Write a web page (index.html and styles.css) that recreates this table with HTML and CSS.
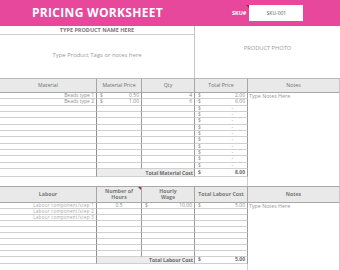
FILE: index.html
```html
<!DOCTYPE html>
<html>
<head>
<meta charset="utf-8">
<link rel="stylesheet" href="styles.css">
</head>
<body>
<div class="sheet">
  <header class="banner">
    <h1 class="title">PRICING WORKSHEET</h1>
    <div class="sku">
      <span class="sku-label">SKU#</span>
      <span class="sku-box">SKU-001<i class="flag"></i></span>
    </div>
  </header>

  <section class="product">
    <div class="product-left">
      <div class="product-name">TYPE PRODUCT NAME HERE</div>
      <div class="product-tags">Type Product Tags or notes here</div>
    </div>
    <div class="product-photo">PRODUCT PHOTO</div>
  </section>

  <section class="table mat">
    <div class="th">Material</div>
    <div class="th">Material Price</div>
    <div class="th">Qty</div>
    <div class="th">Total Price</div>
    <div class="th last">Notes</div>
    <div class="notes-cell mat-notes">Type Notes Here</div>

    <div class="td name">Beads type 1</div><div class="td money"><span>$</span><span>0.50</span></div><div class="td num">4</div><div class="td money"><span>$</span><span>2.00</span></div>
    <div class="td name">Beads type 2</div><div class="td money"><span>$</span><span>1.00</span></div><div class="td num">6</div><div class="td money"><span>$</span><span>6.00</span></div>
    <div class="td name"></div><div class="td"></div><div class="td"></div><div class="td money"><span>$</span><span class="dash">-</span></div>
    <div class="td name"></div><div class="td"></div><div class="td"></div><div class="td money"><span>$</span><span class="dash">-</span></div>
    <div class="td name"></div><div class="td"></div><div class="td"></div><div class="td money"><span>$</span><span class="dash">-</span></div>
    <div class="td name"></div><div class="td"></div><div class="td"></div><div class="td money"><span>$</span><span class="dash">-</span></div>
    <div class="td name"></div><div class="td"></div><div class="td"></div><div class="td money"><span>$</span><span class="dash">-</span></div>
    <div class="td name"></div><div class="td"></div><div class="td"></div><div class="td money"><span>$</span><span class="dash">-</span></div>
    <div class="td name"></div><div class="td"></div><div class="td"></div><div class="td money"><span>$</span><span class="dash">-</span></div>
    <div class="td name"></div><div class="td"></div><div class="td"></div><div class="td money"><span>$</span><span class="dash">-</span></div>
    <div class="td name"></div><div class="td"></div><div class="td"></div><div class="td money"><span>$</span><span class="dash">-</span></div>
    <div class="td name"></div><div class="td"></div><div class="td"></div><div class="td money"><span>$</span><span class="dash">-</span></div>

    <div class="td total-blank"></div>
    <div class="total-label">Total Material Cost</div>
    <div class="td money total-val"><span>$</span><span>8.00</span></div>
    <div class="spacer"></div>
  </section>

  <section class="table lab">
    <div class="th">Labour</div>
    <div class="th two">Number of<br>Hours<i class="flag flag-th"></i></div>
    <div class="th two">Hourly<br>Wage</div>
    <div class="th">Total Labour Cost</div>
    <div class="th last">Notes</div>
    <div class="notes-cell lab-notes">Type Notes Here</div>

    <div class="td name">Labour component/step 1</div><div class="td center">0.5</div><div class="td money"><span>$</span><span>10.00</span></div><div class="td money"><span>$</span><span>5.00</span></div>
    <div class="td name">Labour component/step 2</div><div class="td"></div><div class="td"></div><div class="td"></div>
    <div class="td name">Labour component/step 3</div><div class="td"></div><div class="td"></div><div class="td"></div>
    <div class="td name"></div><div class="td"></div><div class="td"></div><div class="td"></div>
    <div class="td name"></div><div class="td"></div><div class="td"></div><div class="td"></div>
    <div class="td name"></div><div class="td"></div><div class="td"></div><div class="td"></div>
    <div class="td name"></div><div class="td"></div><div class="td"></div><div class="td"></div>
    <div class="td name"></div><div class="td"></div><div class="td"></div><div class="td"></div>
    <div class="td name"></div><div class="td"></div><div class="td"></div><div class="td"></div>

    <div class="td total-blank"></div>
    <div class="total-label">Total Labour Cost</div>
    <div class="td money total-val"><span>$</span><span>5.00</span></div>
    <div class="spacer"></div>
  </section>
</div>
</body>
</html>
```

FILE: styles.css
```css
* { box-sizing: border-box; margin: 0; padding: 0; }
html, body { background: #fff; }
body {
  margin: 0;
  width: 340px;
  height: 270px;
  overflow: hidden;
  font-family: "Open Sans", "DejaVu Sans", sans-serif;
  color: #8a8a8a;
}
.sheet { width: 340px; }

.banner {
  height: 26px;
  background: #e8489c;
  display: grid;
  grid-template-columns: 195px 145px;
  align-items: center;
}
.title {
  font-size: 12px;
  font-weight: 700;
  color: #fff;
  text-align: center;
  letter-spacing: 0.3px;
  line-height: 26px;
}
.sku {
  display: flex;
  align-items: center;
  gap: 3px;
  padding-left: 37px;
}
.sku-label {
  font-size: 5.5px;
  font-weight: 700;
  color: #fff;
}
.sku-box {
  position: relative;
  width: 54px;
  height: 16px;
  background: #fff;
  color: #555;
  font-size: 5px;
  display: flex;
  align-items: center;
  justify-content: center;
}
.flag {
  position: absolute;
  top: 0;
  left: 0;
  width: 0;
  height: 0;
  border-top: 3px solid #d0103a;
  border-left: 3px solid transparent;
  transform: translateX(-3px);
}

.product {
  display: grid;
  grid-template-columns: 195px 145px;
  height: 53px;
  border-bottom: 1px solid #b8b8b8;
}
.product-left {
  display: grid;
  grid-template-rows: 9px 1fr;
  border-right: 1px solid #c4c4c4;
}
.product-name {
  font-size: 5.5px;
  font-weight: 700;
  color: #777;
  text-align: center;
  line-height: 8px;
  border-bottom: 1px solid #cfcfcf;
}
.product-tags {
  font-size: 5.9px;
  color: #9a9a9a;
  display: flex;
  align-items: center;
  justify-content: center;
  padding-bottom: 4px;
}
.product-photo {
  font-size: 5.7px;
  color: #9a9a9a;
  display: flex;
  align-items: center;
  justify-content: center;
  padding-bottom: 8px;
}

.table {
  display: grid;
  grid-template-columns: 97px 45px 53px 53px 92px;
  font-size: 5px;
}
.mat { grid-template-rows: 14px repeat(12, 6.33px) 8px 9px; }
.lab { grid-template-rows: 17px repeat(9, 6px) 7px 6px; }

.th {
  position: relative;
  background: #e9e9e9;
  color: #6f6f6f;
  font-size: 5.2px;
  display: flex;
  align-items: center;
  justify-content: center;
  text-align: center;
  line-height: 6.5px;
  border-right: 1px solid #a6a6a6;
  border-bottom: 1px solid #a8a8a8;
}
.lab .th { border-top: 1px solid #a8a8a8; font-weight: 700; color: #7a7a7a; }
.mat .th { font-weight: 400; }
.th.last { border-right: 1px solid #c8c8c8; }
.flag-th { left: auto; right: 0; transform: none; border-left: 3px solid transparent; }

.td {
  border-right: 1px solid #9a9a9a;
  border-bottom: 1px solid #cfcfcf;
  line-height: 5px;
  white-space: nowrap;
}
.td.name {
  text-align: right;
  padding-right: 2px;
  border-right-color: #8e8e8e;
  color: #8f8f8f;
}
.lab .td.name { font-size: 4.4px; letter-spacing: 0.32px; line-height: 5.5px; color: #a3a3a3; }
.lab .td { line-height: 5.5px; }
.td.num { text-align: right; padding-right: 2px; }
.td.center { text-align: center; }
.td.money {
  display: flex;
  justify-content: space-between;
  padding: 0 2px 0 3px;
}
.dash { padding-right: 12px; }

.notes-cell {
  grid-column: 5;
  grid-row: 2 / -1;
  font-size: 5.3px;
  color: #999;
  padding-left: 1px;
  line-height: 6px;
  border-right: 1px solid #d0d0d0;
}
.total-blank { border-bottom: 1px solid #cfcfcf; }
.total-label {
  grid-column: 2 / span 2;
  background: #ececec;
  color: #6a6a6a;
  font-weight: 700;
  text-align: right;
  padding-right: 1px;
  line-height: 8px;
  border-right: 1px solid #9a9a9a;
  border-bottom: 1px solid #cfcfcf;
}
.lab .total-label { line-height: 7px; }
.total-val { color: #6a6a6a; line-height: 7px; font-weight: 700; }
.spacer { grid-column: 1 / span 4; border-right: 1px solid #cfcfcf; }
.lab .spacer { border-right: 1px solid #d0d0d0; }
```
